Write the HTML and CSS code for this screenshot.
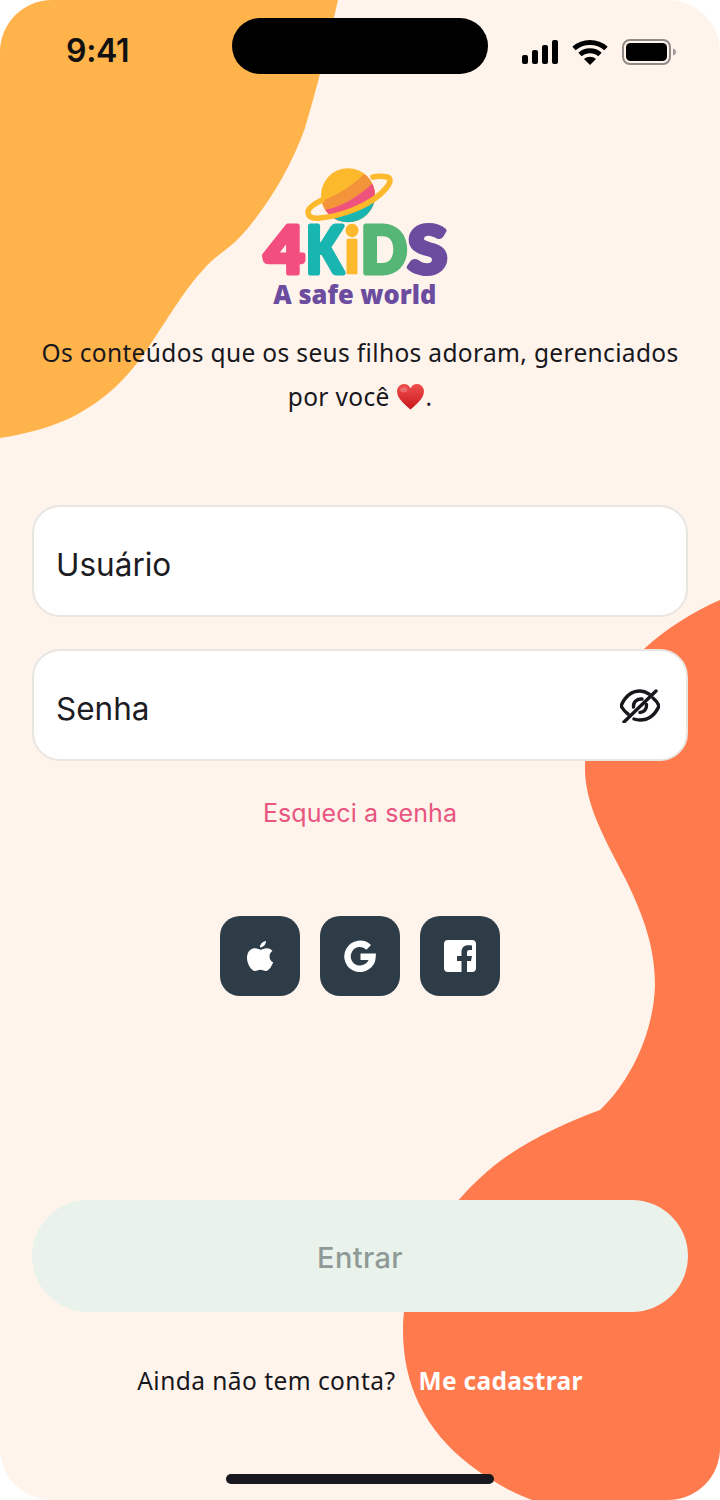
FILE: index.html
```html
<!DOCTYPE html>
<html lang="pt-BR">
<head>
<meta charset="utf-8">
<title>4KiDS</title>
<link rel="stylesheet" href="styles.css">
</head>
<body>
<main class="phone">
  <svg class="blobs" viewBox="0 0 720 1500" aria-hidden="true">
    <path class="blob-yellow" d="M0 0H338C330 35 318 85 305 128C290 170 265 210 240 237C228 250 212 258 203 270C186 288 172 312 150 345C128 378 108 397 78 414C52 428 25 434 0 438Z"/>
    <path class="blob-orange" d="M720 600C690 613 665 630 645 648C612 678 588 715 585 765C584 805 606 840 625 878C645 918 655 950 655 985C654 1030 632 1080 600 1110C560 1125 515 1145 480 1178C440 1215 403 1270 403 1330C403 1385 425 1430 470 1465C490 1480 510 1492 532 1500H720Z"/>
  </svg>

  <header class="status">
    <span class="time">9:41</span>
    <span class="island"></span>
    <span class="status-icons">
      <svg class="signal" viewBox="0 0 36 24" width="36" height="24"><rect x="0" y="15" width="6" height="9" rx="2"/><rect x="10" y="10" width="6" height="14" rx="2"/><rect x="20" y="5" width="6" height="19" rx="2"/><rect x="30" y="0" width="6" height="24" rx="2"/></svg>
      <svg class="wifi" viewBox="0 0 36 26" width="36" height="26"><path d="M2 9.500C11 1.500 25 1.500 34 9.500" /><path d="M8 15.500C13.500 10.500 22.500 10.500 28 15.500"/><path class="wifi-dot" d="M18 26L12 20C15.500 17 20.500 17 24 20Z"/></svg>
      <svg class="battery" viewBox="0 0 56 26" width="56" height="26"><rect class="battery-rim" x="1" y="1" width="47" height="24" rx="7"/><rect x="4" y="4" width="41" height="18" rx="4.500"/><path class="battery-cap" d="M51 9.500C53 10 54 11.500 54 13C54 14.500 53 16 51 16.500Z"/></svg>
    </span>
  </header>

  <section class="brand">
    <svg class="logo" viewBox="0 0 200 150" width="200" height="150" role="img" aria-label="4KiDS A safe world">
      <defs><clipPath id="planetClip"><circle cx="92" cy="33.300" r="27"/></clipPath></defs>
      <circle cx="92" cy="33.300" r="27" fill="#FDB92C"/>
      <g clip-path="url(#planetClip)">
        <path d="M60 40C72 38 92 28 108 12L125 15L125 30L70 60Z" fill="#F4943A"/>
        <path d="M62 49C78 48 100 38 118 20L130 25L125 45L70 65Z" fill="#F0527E"/>
        <path d="M70 58C90 54 108 44 122 30L125 65L70 65Z" fill="#19B5B1"/>
      </g>
      <path class="ring" d="M66 38C58 42 52 46 52 50C52 55 57 57 64 56C75 55 87 52 97 48C112 42 125 33 131 25C135 20 135 16 131 15C127 14 122 14 117 15"/>
      <g class="logo-letters">
        <text class="l-pink" x="8.500" y="110.500" textLength="40" lengthAdjust="spacingAndGlyphs">4</text>
        <text class="l-teal" x="50" y="110.500" textLength="37" lengthAdjust="spacingAndGlyphs">K</text>
        <text class="l-yellow" x="88" y="110.500" textLength="16" lengthAdjust="spacingAndGlyphs">i</text>
        <text class="l-green" x="105" y="110.500" textLength="46" lengthAdjust="spacingAndGlyphs">D</text>
        <text class="l-purple" x="152" y="110.500" textLength="39" lengthAdjust="spacingAndGlyphs">S</text>
      </g>
      <text class="logo-tag" x="17.300" y="142.300" textLength="163" lengthAdjust="spacingAndGlyphs">A safe world</text>
    </svg>
    <p class="tagline">Os conteúdos que os seus filhos adoram, gerenciados<br>por você <svg class="heart" viewBox="0 0 28 26" width="29" height="27" role="img" aria-label="coração"><defs><linearGradient id="heartFill" x1="0" y1="0" x2="0" y2="1"><stop offset="0" stop-color="#F0504F"/><stop offset="1" stop-color="#C9161D"/></linearGradient></defs><path fill="url(#heartFill)" d="M14 25.500C6 19 1 14 1 8C1 3.500 4.500 1 8 1C10.500 1 12.700 2.500 14 5C15.300 2.500 17.500 1 20 1C23.500 1 27 3.500 27 8C27 14 22 19 14 25.500Z"/><ellipse class="heart-shine" cx="7.500" cy="6.500" rx="3.500" ry="2.500"/></svg>.</p>
  </section>

  <form class="form">
    <label class="field"><span class="field-text">Usuário</span></label>
    <label class="field"><span class="field-text">Senha</span>
      <svg class="eye" viewBox="0 0 40 36" width="40" height="36"><path d="M8 27C4.500 24.500 2.500 21.500 1 19C5 9.500 12 4 20 4C23 4 26 5 29 7"/><path d="M33 11C36 13.500 38 16 39 19C35 28 28 33 20 33C18 33 16 32.700 14 32"/><path d="M13.500 20C13 15 17 11.500 22 12"/><path d="M26.500 17.500C27 22 24 25.500 20 25.500"/><path d="M4 35L36 4"/></svg>
    </label>
    <a class="forgot">Esqueci a senha</a>
  </form>

  <div class="socials">
    <a class="social"><svg viewBox="0 0 28 32" width="28" height="32"><path d="M20 1C20.200 3.800 17.500 7.600 14 7.500C13.700 4.500 16.700 1.300 20 1ZM23.500 16.500C23.500 13.500 25.200 12 26.500 11C25 8.800 22.500 8.200 21 8.200C18.500 8 16 9.700 14.700 9.700C13.400 9.700 11.400 8.200 9 8.300C6.200 8.300 1 10.500 1 18C1 24 5.500 31 9 31C10.800 31 12 29.700 14.500 29.700C17 29.700 18 31 19.900 31C23 31 26 25.700 27.200 22.300C25 21.400 23.500 19.300 23.500 16.500Z"/></svg></a>
    <a class="social"><svg class="g" viewBox="0 0 32 32" width="32" height="32"><path d="M24.700 7.300A12.500 12.500 0 1 0 28.500 16.800H16.500"/></svg></a>
    <a class="social"><svg viewBox="0 0 32 32" width="32" height="32"><path fill-rule="evenodd" d="M4 0H28A4 4 0 0 1 32 4V28A4 4 0 0 1 28 32H23V21H27L28 16H23V12.500C23 10.800 23.800 10 25.500 10H28V5.500C26.800 5.300 25.500 5.200 24 5.200C20 5.200 17.500 7.700 17.500 12V16H13V21H17.500V32H4A4 4 0 0 1 0 28V4A4 4 0 0 1 4 0Z"/></svg></a>
  </div>

  <div class="actions">
    <button class="submit" type="button">Entrar</button>
    <p class="signup"><span class="signup-text">Ainda não tem conta?</span><a class="signup-link">Me cadastrar</a></p>
  </div>
  <div class="home-bar"></div>
</main>
</body>
</html>
```
FILE: styles.css
```css
* { box-sizing: border-box; }
html, body { margin: 0; padding: 0; background: #fff; }
.phone {
  position: relative;
  width: 720px;
  height: 1500px;
  overflow: hidden;
  border-radius: 52px;
  background: #FFF4EC;
  display: flex;
  flex-direction: column;
  font-family: "Noto Sans", "Lato", sans-serif;
  color: #17171C;
}
.blobs { position: absolute; inset: 0; width: 720px; height: 1500px; }
.blob-yellow { fill: #FFB44B; }
.blob-orange { fill: #FF7A4D; }
.phone > :not(.blobs) { position: relative; }

.status {
  height: 74px;
  padding: 18px 42px 0 66px;
  display: grid;
  grid-template-columns: 166px 256px 1fr;
  align-items: start;
  flex: none;
}
.time { font: 600 32px/1 "Inter", "Liberation Sans", sans-serif; margin-top: 17px; letter-spacing: -0.3px; color: #111; }
.island { height: 56px; border-radius: 28px; background: #000; }
.status-icons { display: flex; align-items: center; justify-content: flex-end; height: 24px; gap: 14px; margin-top: 22px; }
.status-icons svg { display: block; fill: #000; }
.wifi path { fill: none; stroke: #000; stroke-width: 5; }
.wifi .wifi-dot { fill: #000; stroke: none; }
.battery .battery-rim { fill: none; stroke: #8f8a88; stroke-width: 2; }
.battery .battery-cap { fill: #a09b99; }

.brand { display: flex; flex-direction: column; align-items: center; flex: none; }
.logo { display: block; margin-top: 88px; overflow: visible; transform: translateX(-4px); }
.ring { fill: none; stroke: #FDB92C; stroke-width: 5.500; stroke-linecap: round; stroke-linejoin: round; }
.logo-letters text {
  font: 900 65px "Lato", sans-serif;
  stroke-width: 5;
  stroke-linejoin: round;
  paint-order: stroke;
}
.logo-letters .l-yellow { stroke-width: 2.500; }
.l-pink { fill: #F34E80; stroke: #F34E80; }
.l-teal { fill: #19B5B1; stroke: #19B5B1; }
.l-yellow { fill: #FDB92C; stroke: #FDB92C; }
.l-green { fill: #55B676; stroke: #55B676; }
.l-purple { fill: #6B4C9F; stroke: #6B4C9F; }
.logo-tag { font: 800 27px "Open Sans", sans-serif; fill: #6B4C9F; }
.tagline {
  margin: 19px 0 0;
  width: 100%;
  text-align: center;
  font-size: 24.500px;
  line-height: 44px;
  letter-spacing: 0.34px;
}
.heart { display: inline-block; vertical-align: -4px; }
.heart-shine { fill: #fff; opacity: 0.22; }

.form { display: flex; flex-direction: column; gap: 32px; padding: 0 32px; margin-top: 86px; flex: none; }
.field {
  height: 112px;
  background: #fff;
  border: 2px solid #E9E5E1;
  border-radius: 28px;
  display: flex;
  align-items: center;
  justify-content: space-between;
  padding: 0 26px 0 22px;
  font: 400 31.500px "Inter", "Noto Sans", sans-serif;
  color: #1c1c22;
}
.field-text { padding-top: 6px; }
.eye { fill: none; stroke: #17171C; stroke-width: 3.400; stroke-linecap: round; stroke-linejoin: round; }
.forgot {
  font: 400 25px "Inter", "Noto Sans", sans-serif;
  letter-spacing: 0.1px;
  color: #E8557F;
  text-align: center;
  margin-top: 3px;
  line-height: 34px;
}

.socials { display: flex; justify-content: center; gap: 20px; margin-top: 86px; flex: none; }
.social {
  width: 80px; height: 80px; border-radius: 20px;
  background: #2D3C46;
  display: flex; align-items: center; justify-content: center;
}
.social svg { fill: #fff; }
.social .g { fill: none; stroke: #fff; stroke-width: 6.500; }

.actions { margin-top: 204px; padding: 0 32px; flex: none; }
.submit {
  display: block;
  width: 100%;
  height: 112px;
  border: 0;
  border-radius: 56px;
  background: #E9F3EC;
  color: #8F9A97;
  font: 500 29px "Inter", "Noto Sans", sans-serif;
  letter-spacing: 0.4px;
  padding: 2px 0 0;
}
.signup {
  margin: 49px 0 0;
  display: flex;
  justify-content: center;
  gap: 23px;
  font-size: 24.500px;
  line-height: 40px;
}
.signup-text { letter-spacing: 0.45px; }
.signup-link { color: #fff; font-weight: 700; letter-spacing: 0.3px; }
.home-bar {
  position: absolute !important;
  left: 226px; bottom: 16px;
  width: 268px; height: 10px;
  border-radius: 5px;
  background: #17171F;
}
```
